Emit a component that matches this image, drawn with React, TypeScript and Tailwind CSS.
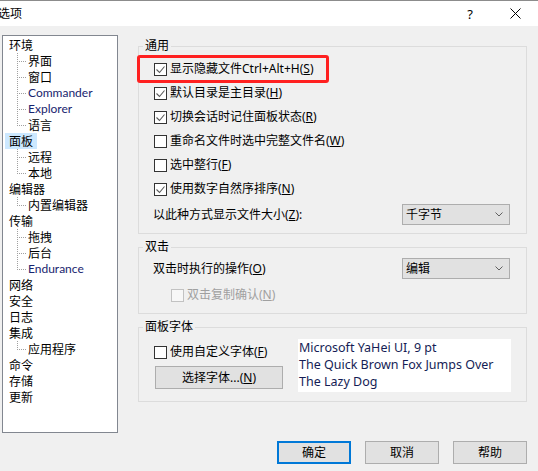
import React from "react";

type Node = { label: string; latin?: boolean; selected?: boolean; children?: { label: string; latin?: boolean }[] };

const tree: Node[] = [
  { label: "环境", children: [{ label: "界面" }, { label: "窗口" }, { label: "Commander", latin: true }, { label: "Explorer", latin: true }, { label: "语言" }] },
  { label: "面板", selected: true, children: [{ label: "远程" }, { label: "本地" }] },
  { label: "编辑器", children: [{ label: "内置编辑器" }] },
  { label: "传输", children: [{ label: "拖拽" }, { label: "后台" }, { label: "Endurance", latin: true }] },
  { label: "网络" },
  { label: "安全" },
  { label: "日志" },
  { label: "集成", children: [{ label: "应用程序" }] },
  { label: "命令" },
  { label: "存储" },
  { label: "更新" },
];

const Check = ({ checked, disabled }: { checked?: boolean; disabled?: boolean }) => (
  <span
    className={
      "inline-flex w-[13px] h-[13px] shrink-0 items-center justify-center border " +
      (disabled ? "border-[#c2c2c2] bg-[#f7f7f7]" : "border-[#333333] bg-white")
    }
  >
    {checked && (
      <svg width="11" height="11" viewBox="0 0 11 11">
        <path d="M1.5 5.5 L4.5 8.5 L9.5 2.5" fill="none" stroke="#5a5a5a" strokeWidth="1.1" />
      </svg>
    )}
  </span>
);

const Connector = ({ last }: { last: boolean }) => (
  <svg width="25" height="16" className="shrink-0" shapeRendering="crispEdges">
    <line x1="14.5" y1="0" x2="14.5" y2={last ? 9 : 16} stroke="#a0a0a0" strokeDasharray="1 1" />
    <line x1="16" y1="8.5" x2="23" y2="8.5" stroke="#a0a0a0" strokeDasharray="1 1" />
  </svg>
);

const Chevron = () => (
  <svg width="8" height="5" viewBox="0 0 8 5">
    <path d="M0.5 0.5 L4 4 L7.5 0.5" fill="none" stroke="#606060" strokeWidth="1" />
  </svg>
);

const Dropdown = ({ value }: { value: string }) => (
  <div className="w-[108px] h-[21px] flex items-center justify-between border border-[#adadad] bg-[#e1e1e1] pl-[3px] pr-[6px] mr-[16px]">
    <span>{value}</span>
    <Chevron />
  </div>
);

const Button = ({ children, primary }: { children: React.ReactNode; primary?: boolean }) => (
  <button
    className={
      "w-[74px] h-[23px] flex items-center justify-center bg-[#e1e1e1] " +
      (primary ? "border-2 border-[#0078d7]" : "border border-[#adadad]")
    }
  >
    {children}
  </button>
);

const App = () => {
  return (
    <div className="w-[538px] h-[471px] overflow-hidden bg-[#f0f0f0] text-[12px] leading-[16px] text-black font-['Noto_Sans','Noto_Sans_CJK_SC',sans-serif]">
      {/* title bar */}
      <div className="h-[26px] bg-white border-t border-[#8c8c8c] flex items-center">
        <span className="-ml-[2px]">选项</span>
        <div className="ml-auto flex items-center h-full">
          <span className="w-[46px] text-center text-[13px]">?</span>
          <span className="w-[45px] flex justify-center">
            <svg width="11" height="11" viewBox="0 0 11 11">
              <path d="M0.5 0.5 L10.5 10.5 M10.5 0.5 L0.5 10.5" stroke="#000" strokeWidth="1" />
            </svg>
          </span>
        </div>
      </div>

      <div className="flex items-start">
        {/* tree */}
        <div className="ml-[2px] mt-[9px] w-[116px] h-[398px] border border-[#828790] bg-white pt-[1px] font-['Noto_Sans_CJK_SC',sans-serif]">
          {tree.map((n) => (
            <div key={n.label}>
              <div className="h-[16px] flex pl-[2px]">
                <span className={"px-[4px] " + (n.selected ? "bg-[#cce8ff]" : "")}>{n.label}</span>
              </div>
              {n.children?.map((c, i) => (
                <div key={c.label} className="h-[16px] flex">
                  <Connector last={i === n.children!.length - 1} />
                  <span className={c.latin ? "text-[#18246e] font-['Lato',sans-serif]" : ""}>{c.label}</span>
                </div>
              ))}
            </div>
          ))}
        </div>

        {/* right side */}
        <div className="ml-[20px] mt-[12px] w-[389px]">
          <fieldset className="border border-[#dcdcdc] pt-[3px] pb-[8px]">
            <legend className="ml-[4px] px-[2px]">通用</legend>
            <div className="relative h-[24px] flex items-center gap-[3px] pl-[15px]">
              <Check checked />
              <span>
                显示隐藏文件Ctrl+Alt+H(<u>S</u>)
              </span>
              <div className="absolute -left-[2px] -top-[2px] w-[192px] h-[28px] border-[3px] border-[#ff2020] rounded-[3px] pointer-events-none" />
            </div>
            <div className="h-[24px] flex items-center gap-[3px] pl-[15px]">
              <Check checked />
              <span>
                默认目录是主目录(<u>H</u>)
              </span>
            </div>
            <div className="h-[24px] flex items-center gap-[3px] pl-[15px]">
              <Check checked />
              <span>
                切换会话时记住面板状态(<u>R</u>)
              </span>
            </div>
            <div className="h-[24px] flex items-center gap-[3px] pl-[15px]">
              <Check />
              <span>
                重命名文件时选中完整文件名(<u>W</u>)
              </span>
            </div>
            <div className="h-[24px] flex items-center gap-[3px] pl-[15px]">
              <Check />
              <span>
                选中整行(<u>F</u>)
              </span>
            </div>
            <div className="h-[24px] flex items-center gap-[3px] pl-[15px]">
              <Check checked />
              <span>
                使用数字自然序排序(<u>N</u>)
              </span>
            </div>
            <div className="mt-[3px] flex items-center justify-between pl-[14px]">
              <span>
                以此种方式显示文件大小(<u>Z</u>):
              </span>
              <Dropdown value="千字节" />
            </div>
          </fieldset>

          <fieldset className="mt-[5px] border border-[#dcdcdc] pt-[3px] pb-[6px]">
            <legend className="ml-[4px] px-[2px]">双击</legend>
            <div className="flex items-center justify-between pl-[14px]">
              <span>
                双击时执行的操作(<u>O</u>)
              </span>
              <Dropdown value="编辑" />
            </div>
            <div className="mt-[4px] h-[24px] flex items-center gap-[3px] pl-[32px] text-[#a0a0a0]">
              <Check disabled />
              <span>
                双击复制确认(<u>N</u>)
              </span>
            </div>
          </fieldset>

          <fieldset className="mt-[5px] border border-[#dcdcdc] pt-[4px] pb-[9px]">
            <legend className="ml-[4px] px-[2px]">面板字体</legend>
            <div className="flex pl-[15px]">
              <div className="w-[144px]">
                <div className="mt-[1px] h-[24px] flex items-center gap-[3px]">
                  <Check />
                  <span>
                    使用自定义字体(<u>F</u>)
                  </span>
                </div>
                <button className="mt-[2px] ml-[1px] w-[128px] h-[23px] flex items-center justify-center border border-[#adadad] bg-[#e1e1e1]">
                  选择字体...(<u>N</u>)
                </button>
              </div>
              <div className="w-[213px] h-[53px] bg-white text-[12.5px] leading-[17px] text-[#151d55] pl-[1px]">
                <div>Microsoft YaHei UI, 9 pt</div>
                <div>The Quick Brown Fox Jumps Over</div>
                <div>The Lazy Dog</div>
              </div>
            </div>
          </fieldset>
        </div>
      </div>

      <div className="mt-[8px] flex justify-end gap-[14px] pr-[11px]">
        <Button primary>确定</Button>
        <Button>取消</Button>
        <Button>帮助</Button>
      </div>
    </div>
  );
};

export default App;
